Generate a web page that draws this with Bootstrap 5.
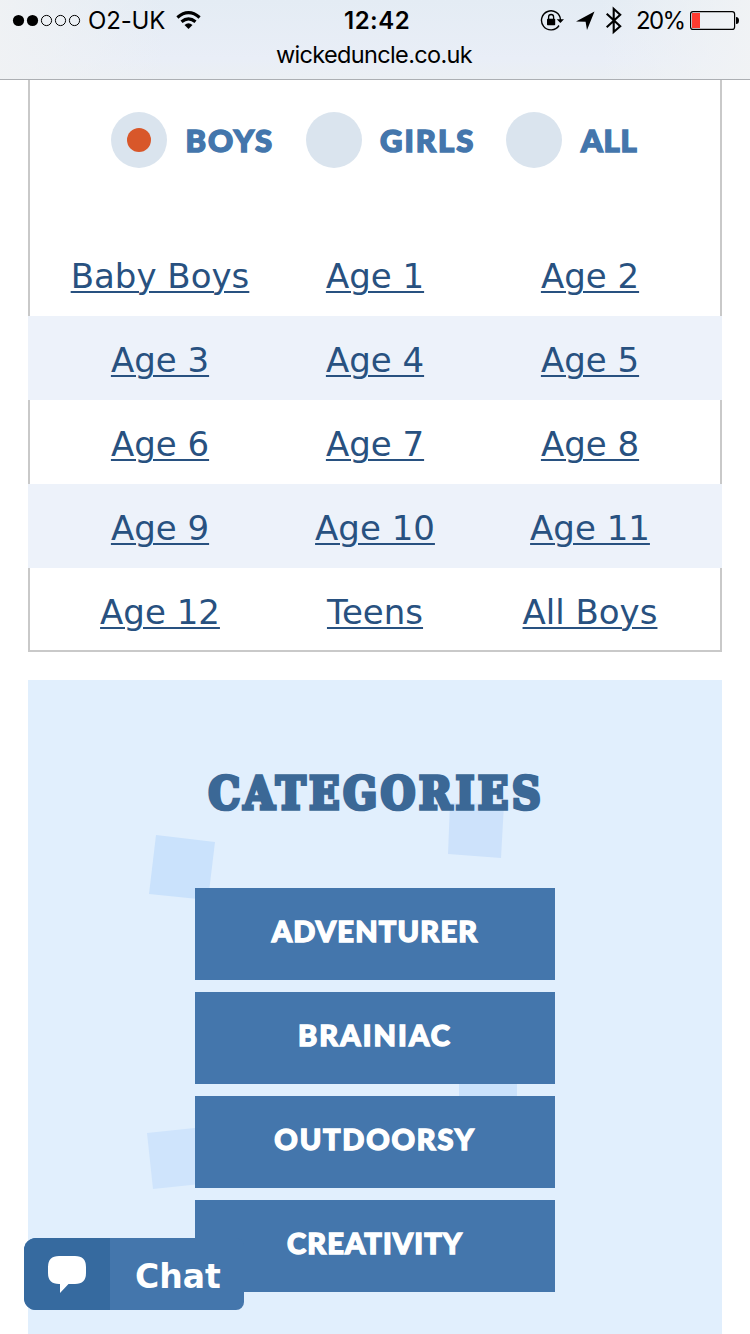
<!DOCTYPE html>
<html lang="en">
<head>
<meta charset="utf-8">
<meta name="viewport" content="width=device-width, initial-scale=1">
<title>Wicked Uncle</title>
<link href="https://cdn.jsdelivr.net/npm/bootstrap@5.3.0/dist/css/bootstrap.min.css" rel="stylesheet">
<style>
  body { font-family: "DejaVu Sans", Verdana, sans-serif; background: #fff; height: 1334px; overflow: hidden; }
  .phone-bar { height: 80px; border-bottom: 1px solid #acafb3; color: #000; font-family: Inter, sans-serif;
    background: linear-gradient(90deg, rgba(240,242,244,.9), rgba(232,238,246,0) 22%, rgba(232,238,246,0) 80%, rgba(241,243,245,.9)), linear-gradient(#e4ecf4, #e9eef7 75%, #ebeff3); }
  .status-row { height: 40px; line-height: 41px; font-size: 24px; }
  .status-row svg, .chat svg { display: block; flex: none; }
  .carrier { width: 77px; letter-spacing: -.15px; margin-left: -1px; margin-right: 1px; }
  .clock { width: 70px; font-weight: 600; letter-spacing: .5px; }
  .charge { width: 50px; letter-spacing: -1.6px; margin-left: -1px; }
  .site { font-size: 23.5px; line-height: 29px; letter-spacing: -.65px; text-indent: -2px; }
  .ages { margin: 0 28px; border: 2px solid #c9c9c9; border-top: 0; height: 572px; }
  .who { height: 152px; padding: 32px 0 0 81px; }
  .who label, .cat { font-family: Lato, sans-serif; font-weight: 900; }
  .who label { height: 56px; color: #4476ac; font-size: 31px; line-height: 56px; -webkit-text-stroke: 1.5px #4476ac; }
  .dial { width: 56px; height: 56px; background: #dae4ee; flex: none; }
  .dot { width: 24px; height: 24px; background: #d8572a; }
  .age-row { height: 84px; margin: 0 -2px; padding: 0 24.5px; font-size: 34px; line-height: 88px; }
  .age-row.tint { background: #edf2fa; }
  .age-row a { color: #285180; text-decoration-thickness: 2px; text-underline-offset: 3px; }
  .cats { margin: 28px 28px 0; height: 654px; background: #e1effd; padding-top: 80px; }
  .cats h2 { height: 128px; margin: 0; font: bold 44px/68px "DejaVu Serif Condensed", "DejaVu Serif", serif; font-stretch: condensed; letter-spacing: 3.8px; text-indent: 3px; color: #3b6896; -webkit-text-stroke: 3.6px #3b6896; }
  .cat { width: 360px; height: 92px; background: #4476ac; color: #fff; font-size: 29px; line-height: 86px; -webkit-text-stroke: 1.4px #fff; }
  .confetti { left: 0; top: 0; }
  .chat { left: 24px; top: 1238px; width: 220px; height: 72px; border-radius: 12px 8px 8px 12px; background: #4476ac; }
  .chat .bubble { width: 86px; background: #366a9f; }
  .chat span { font-size: 33px; line-height: 78px; padding-left: 25px; }
</style>
</head>
<body class="position-relative">
<header class="phone-bar">
  <div class="status-row d-flex">
    <svg width="89" height="40"><circle cx="18.5" cy="20.5" r="5.6"/><circle cx="32.5" cy="20.5" r="5.6"/><g fill="none" stroke="#000"><circle cx="46.5" cy="20.5" r="5.1"/><circle cx="60.5" cy="20.5" r="5.1"/><circle cx="74.5" cy="20.5" r="5.1"/></g></svg>
    <span class="carrier text-nowrap">O2-UK</span>
    <svg width="178" height="40"><g fill="none" stroke="#000" stroke-width="3.1"><path d="M11.4 17.5Q22.5 7.7 33.6 17.5"/><path d="M15.5 21.8Q22.5 15.8 29.5 21.8"/></g><path d="M18.5 25Q22.5 21.6 26.5 25L22.5 29Z"/></svg>
    <span class="clock text-nowrap">12:42</span>
    <svg class="ms-auto" width="97" height="40" viewBox="540 0 97 40">
      <path d="M559 25.5A9.5 9.5 0 1 1 560.5 20" fill="none" stroke="#000" stroke-width="1.4"/>
      <path d="M556.7 19.2H564L560.4 23Z"/>
      <rect x="547" y="18.7" width="8.2" height="6.6" rx=".7"/>
      <path d="M548.6 19V17a2.5 2.5 0 0 1 5 0V19" fill="none" stroke="#000" stroke-width="1.3"/>
      <path d="M576 21.6L594.5 11.6L587 30L585.6 21.7Z"/>
      <path d="M606.7 13.8L620.2 26.2L613.7 32V8.8L620.2 14.7L606.7 27.2" fill="none" stroke="#000" stroke-width="2.1"/>
    </svg>
    <span class="charge text-nowrap">20%</span>
    <svg width="64" height="40" viewBox="686 0 64 40"><rect x="690.6" y="11.6" width="44" height="17.8" rx="2.5" fill="none" stroke="#000" stroke-width="1.2"/><rect x="692" y="13" width="8" height="15" fill="#ff3b30"/><path d="M736 17q3 0 3 3.5t-3 3.5z"/></svg>
  </div>
  <div class="site text-center">wickeduncle.co.uk</div>
</header>
<main>
  <section class="ages">
    <div class="who d-flex">
      <label class="d-flex" style="width:195px"><i class="dial rounded-circle d-flex align-items-center justify-content-center"><i class="dot rounded-circle"></i></i><span style="margin-left:18.5px;letter-spacing:1.9px">BOYS</span></label>
      <label class="d-flex" style="width:200px"><i class="dial rounded-circle"></i><span style="margin-left:18px;letter-spacing:2px">GIRLS</span></label>
      <label class="d-flex"><i class="dial rounded-circle"></i><span style="margin-left:19px;letter-spacing:.8px">ALL</span></label>
    </div>
    <div class="age-row row gx-0 text-center"><div class="col"><a href="#">Baby Boys</a></div><div class="col"><a href="#">Age 1</a></div><div class="col"><a href="#">Age 2</a></div></div>
    <div class="age-row tint row gx-0 text-center"><div class="col"><a href="#">Age 3</a></div><div class="col"><a href="#">Age 4</a></div><div class="col"><a href="#">Age 5</a></div></div>
    <div class="age-row row gx-0 text-center"><div class="col"><a href="#">Age 6</a></div><div class="col"><a href="#">Age 7</a></div><div class="col"><a href="#">Age 8</a></div></div>
    <div class="age-row tint row gx-0 text-center"><div class="col"><a href="#">Age 9</a></div><div class="col"><a href="#">Age 10</a></div><div class="col"><a href="#">Age 11</a></div></div>
    <div class="age-row row gx-0 text-center" style="height:82px"><div class="col"><a href="#">Age 12</a></div><div class="col"><a href="#">Teens</a></div><div class="col"><a href="#">All Boys</a></div></div>
  </section>
  <section class="cats position-relative">
    <svg class="confetti position-absolute" width="694" height="654" viewBox="28 680 694 654" fill="#cae2fc"><path d="M156 835L215 842L208 900L149 894Z"/><path d="M450 803L504 804L501 858L448 854Z" fill="#cde2fb"/><path d="M459 1040H517V1098H459Z"/><path d="M147 1133L204 1127L210 1183L153 1189Z" fill="#cfe4fc"/></svg>
    <h2 class="position-relative text-center">CATEGORIES</h2>
    <div class="position-relative d-flex flex-column align-items-center text-center" style="gap:12px">
      <a class="cat text-decoration-none" style="letter-spacing:1.2px">ADVENTURER</a>
      <a class="cat text-decoration-none" style="letter-spacing:2.1px">BRAINIAC</a>
      <a class="cat text-decoration-none" style="letter-spacing:1.8px">OUTDOORSY</a>
      <a class="cat text-decoration-none" style="letter-spacing:1.1px">CREATIVITY</a>
    </div>
  </section>
</main>
<div class="chat position-absolute d-flex overflow-hidden text-white fw-bold">
  <div class="bubble"><svg width="86" height="72"><path d="M35 18H51Q62 18 62 29V35Q62 46 51 46H44.5L36 55V46H35Q24 46 24 35V29Q24 18 35 18Z" fill="#fff"/></svg></div>
  <span>Chat</span>
</div>
</body>
</html>
